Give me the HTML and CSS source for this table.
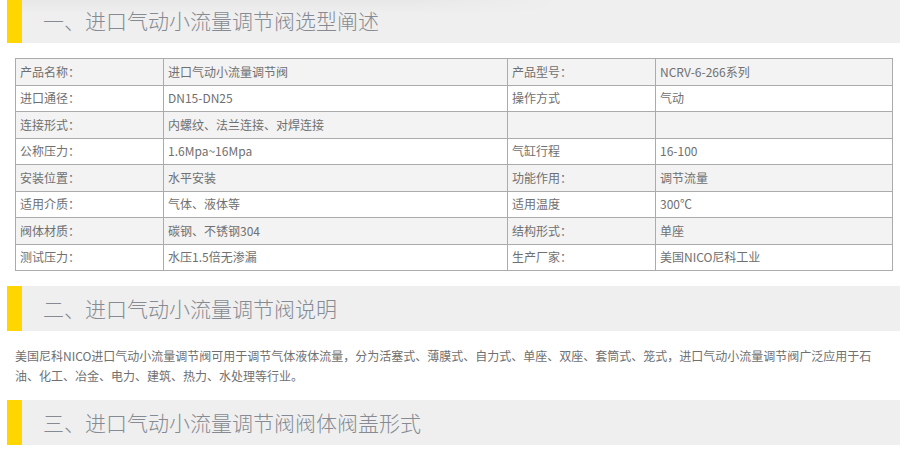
FILE: index.html
```html
<!DOCTYPE html>
<html lang="zh-CN">
<head>
<meta charset="utf-8">
<title>进口气动小流量调节阀</title>
<link rel="stylesheet" href="styles.css">
</head>
<body>
<div class="page">
  <h2 class="sec-title first">一、进口气动小流量调节阀选型阐述</h2>
  <div class="content">
    <table class="spec">
      <colgroup>
        <col class="c1"><col class="c2"><col class="c3"><col class="c4">
      </colgroup>
      <tbody>
        <tr class="alt"><td>产品名称：</td><td>进口气动小流量调节阀</td><td>产品型号：</td><td>NCRV-6-266系列</td></tr>
        <tr><td>进口通径：</td><td>DN15-DN25</td><td>操作方式</td><td>气动</td></tr>
        <tr class="alt"><td>连接形式：</td><td>内螺纹、法兰连接、对焊连接</td><td></td><td></td></tr>
        <tr><td>公称压力：</td><td>1.6Mpa~16Mpa</td><td>气缸行程</td><td>16-100</td></tr>
        <tr class="alt"><td>安装位置：</td><td>水平安装</td><td>功能作用：</td><td>调节流量</td></tr>
        <tr><td>适用介质：</td><td>气体、液体等</td><td>适用温度</td><td>300℃</td></tr>
        <tr class="alt"><td>阀体材质：</td><td>碳钢、不锈钢304</td><td>结构形式：</td><td>单座</td></tr>
        <tr><td>测试压力：</td><td>水压1.5倍无渗漏</td><td>生产厂家：</td><td>美国NICO尼科工业</td></tr>
      </tbody>
    </table>
  </div>
  <h2 class="sec-title">二、进口气动小流量调节阀说明</h2>
  <div class="content text">
    <p class="desc">美国尼科NICO进口气动小流量调节阀可用于调节气体液体流量，分为活塞式、薄膜式、自力式、单座、双座、套筒式、笼式，进口气动小流量调节阀广泛应用于石油、化工、冶金、电力、建筑、热力、水处理等行业。</p>
  </div>
  <h2 class="sec-title">三、进口气动小流量调节阀阀体阀盖形式</h2>
</div>
</body>
</html>
```

FILE: styles.css
```css
* { box-sizing: border-box; }
html, body { margin: 0; padding: 0; background: #fff; }
body {
  font-family: "Noto Sans CJK SC", "Noto Sans", sans-serif;
  color: #666;
  overflow: hidden;
}
.page {
  width: 893px;
  margin: -2px 0 0 7px;
}
.sec-title {
  position: relative;
  margin: 0;
  height: 45px;
  line-height: 45px;
  background: #efefef;
  border-left: 15px solid #ffd600;
  padding-left: 21px;
  font-size: 21px;
  font-weight: 300;
  color: #868b93;
  white-space: nowrap;
}
.sec-title.first::before {
  content: "";
  position: absolute;
  left: 0;
  top: 0;
  width: 540px;
  height: 16px;
  background: linear-gradient(to bottom, rgba(0,0,0,0.035), rgba(0,0,0,0));
  -webkit-mask-image: linear-gradient(to right, #000 70%, transparent);
  mask-image: linear-gradient(to right, #000 70%, transparent);
  pointer-events: none;
}
.content {
  padding: 15px 8px 15px;
}
.content.text {
  padding-top: 15px;
  padding-bottom: 14px;
}
.spec {
  width: 877px;
  border-collapse: collapse;
  table-layout: fixed;
  font-size: 12px;
}
.spec col.c1 { width: 148px; }
.spec col.c2 { width: 344px; }
.spec col.c3 { width: 148px; }
.spec col.c4 { width: 237px; }
.spec tr { height: 26.5px; }
.spec td {
  border: 1px solid #ababab;
  padding: 0 4px;
  line-height: 16px;
  vertical-align: middle;
  color: #707070;
  white-space: nowrap;
}
.spec tr.alt td { background: #f3f3f3; }
.desc {
  margin: 0;
  width: 877px;
  font-size: 12px;
  line-height: 20px;
  color: #707070;
}
```
